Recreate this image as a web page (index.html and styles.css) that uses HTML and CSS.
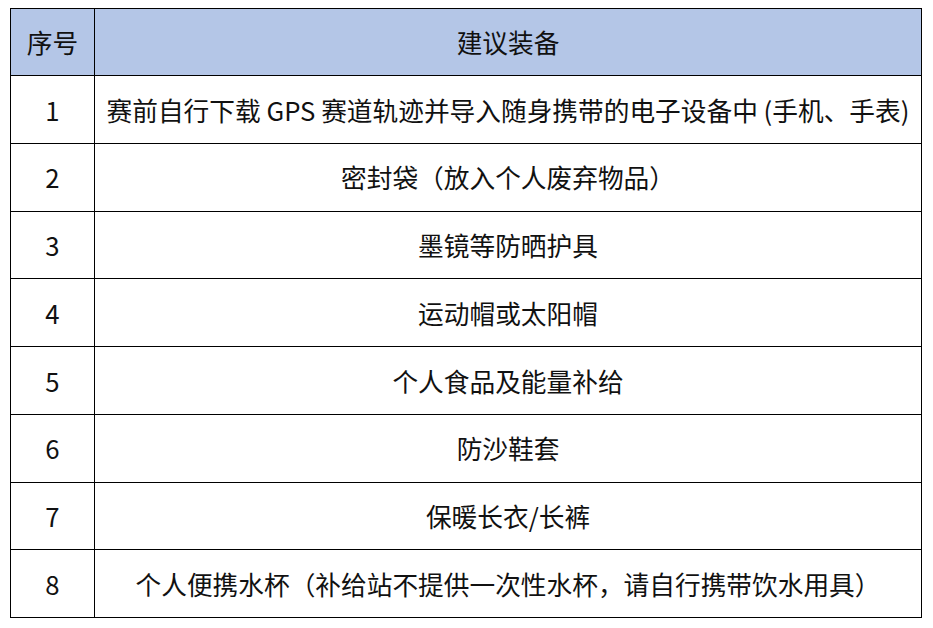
FILE: index.html
```html
<!DOCTYPE html>
<html lang="zh">
<head>
<meta charset="utf-8">
<link rel="stylesheet" href="styles.css">
</head>
<body>
<table class="gear">
  <thead>
    <tr><th class="num">序号</th><th>建议装备</th></tr>
  </thead>
  <tbody>
    <tr><td class="num">1</td><td>赛前自行下载 GPS 赛道轨迹并导入随身携带的电子设备中 (手机、手表)</td></tr>
    <tr><td class="num">2</td><td>密封袋（放入个人废弃物品）</td></tr>
    <tr><td class="num">3</td><td>墨镜等防晒护具</td></tr>
    <tr><td class="num">4</td><td>运动帽或太阳帽</td></tr>
    <tr><td class="num">5</td><td>个人食品及能量补给</td></tr>
    <tr><td class="num">6</td><td>防沙鞋套</td></tr>
    <tr><td class="num">7</td><td>保暖长衣/长裤</td></tr>
    <tr><td class="num">8</td><td>个人便携水杯（补给站不提供一次性水杯，请自行携带饮水用具）</td></tr>
  </tbody>
</table>
</body>
</html>
```
FILE: styles.css
```css
html, body {
  margin: 0;
  padding: 0;
  background: #ffffff;
}
body {
  padding: 8px 0 0 10px;
  font-family: "Noto Sans CJK SC", "Noto Sans", sans-serif;
  color: #111;
}
.gear {
  border-collapse: collapse;
  width: 912px;
  table-layout: fixed;
}
.gear th, .gear td {
  border: 1px solid #000;
  text-align: center;
  vertical-align: middle;
  font-size: 25.7px;
  font-weight: normal;
  padding: 0;
  white-space: nowrap;
  line-height: 1;
}
.gear th {
  background: #b4c6e7;
  height: 66px;
}
.gear td {
  height: 66.75px;
}
.gear .num {
  width: 83px;
}
```
